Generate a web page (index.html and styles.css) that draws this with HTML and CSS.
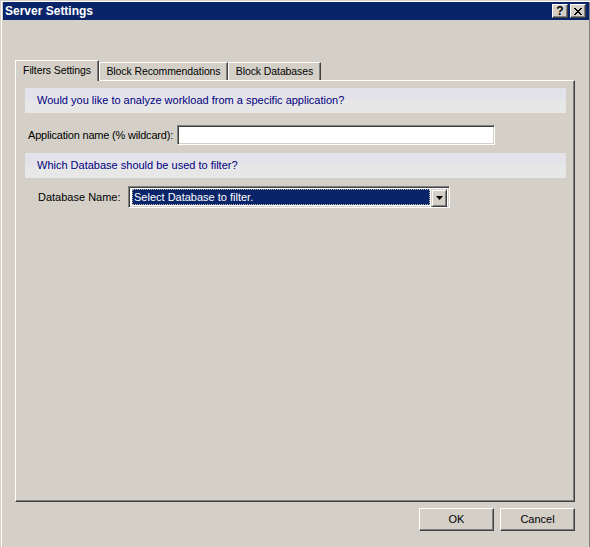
FILE: index.html
```html
<html>
  <head>
    <title>Server Settings</title>
    <link rel="stylesheet" href="styles.css">
  </head>
  <body>
    <div class="window">
      <div class="titlebar">
        <div class="title">Server Settings</div>
        <div class="caption-buttons">
          <div class="cap-btn">?</div>
          <div class="cap-btn close">
            <svg width="8" height="7" viewBox="0 0 8 7">
              <path d="M0 0h2v1H0zM6 0h2v1H6zM1 1h2v1H1zM5 1h2v1H5zM2 2h4v1H2zM3 3h2v1H3zM2 4h4v1H2zM1 5h2v1H1zM5 5h2v1H5zM0 6h2v1H0zM6 6h2v1H6z" fill="#000"/>
            </svg>
          </div>
        </div>
      </div>
      <div class="client">
        <div class="tabs">
          <div class="tab active tab-filters">Filters Settings</div>
          <div class="tab tab-recs">Block Recommendations</div>
          <div class="tab tab-dbs">Block Databases</div>
        </div>
        <div class="panel">
          <div class="band">Would you like to analyze workload from a specific application?</div>
          <div class="row app-row">
            <div class="label app-label">Application name (% wildcard):</div>
            <div class="textbox app-box"></div>
          </div>
          <div class="band second">Which Database should be used to filter?</div>
          <div class="row db-row">
            <div class="label db-label">Database Name:</div>
            <div class="combo">
              <div class="combo-value"><span class="focus">Select Database to filter.</span></div>
              <div class="combo-btn">
                <svg width="7" height="4" viewBox="0 0 7 4"><path d="M0 0h7L3.5 4z" fill="#000"/></svg>
              </div>
            </div>
          </div>
        </div>
        <div class="buttons">
          <div class="button">OK</div>
          <div class="button">Cancel</div>
        </div>
      </div>
    </div>
  </body>
</html>
```

FILE: styles.css
```css
body {
  margin: 0;
  background: #d4d0c8;
  font-family: "Liberation Sans", Arial, sans-serif;
  font-size: 11px;
  color: #000;
  overflow: hidden;
}
.window {
  width: 586px;
  height: 560px;
  border: 1px solid;
  border-color: #d4d0c8 #404040 #404040 #d4d0c8;
  box-shadow: inset 1px 1px #fff, inset -1px -1px #808080;
  padding: 1px 1px 0 2px;
}
.titlebar {
  height: 18px;
  background: #0a246a;
  display: flex;
  align-items: center;
  justify-content: space-between;
}
.title {
  color: #fff;
  font-weight: bold;
  font-size: 12px;
  padding-left: 2px;
}
.caption-buttons {
  display: flex;
  gap: 2px;
  padding-right: 3px;
}
.cap-btn {
  width: 14px;
  height: 12px;
  background: #d4d0c8;
  border: 1px solid;
  border-color: #fff #404040 #404040 #fff;
  box-shadow: inset -1px -1px #808080;
  display: flex;
  align-items: center;
  justify-content: center;
  font-weight: bold;
  font-size: 12px;
  line-height: 12px;
}
.client {
  padding: 40px 14px 0 12px;
}
.tabs {
  display: flex;
  align-items: flex-end;
  height: 21px;
  position: relative;
  z-index: 1;
  margin-bottom: -1px;
}
.tab {
  box-sizing: border-box;
  height: 18px;
  border: 1px solid;
  border-bottom: none;
  border-color: #fff #404040 transparent #fff;
  box-shadow: inset -1px 0 #808080;
  line-height: 17px;
  margin-bottom: 1px;
  text-align: center;
  white-space: nowrap;
  font-size: 10.5px;
  letter-spacing: -0.1px;
}
.tab.active {
  height: 21px;
  line-height: 19px;
  margin-bottom: 0;
  background: #d4d0c8;
}
.tab-filters {
  width: 84px;
}
.tab-recs {
  width: 129px;
}
.tab-dbs {
  width: 93px;
}
.panel {
  height: 411px;
  border: 1px solid;
  border-color: #fff #404040 #404040 #fff;
  box-shadow: inset -1px -1px #808080;
  padding: 7px 8px 2px 9px;
}
.band {
  height: 25px;
  line-height: 25px;
  padding-left: 12px;
  color: #000080;
  white-space: nowrap;
  background: linear-gradient(#e3e1e9, #e5e3ea 50%, #e7e7e7 55%, #e7e7e7);
}
.band.second {
  margin-top: 8px;
}
.row {
  display: flex;
  align-items: center;
}
.label {
  white-space: nowrap;
}
.app-row {
  margin-top: 12px;
}
.app-label {
  width: 149px;
  margin-left: 3px;
  letter-spacing: -0.2px;
}
.textbox {
  height: 18px;
  background: #fff;
  border: 1px solid;
  border-color: #808080 #fff #fff #808080;
  box-shadow: inset 1px 1px #404040, inset -1px -1px #d4d0c8;
}
.app-box {
  width: 316px;
}
.db-row {
  margin-top: 8px;
}
.db-label {
  width: 90px;
  margin-left: 13px;
}
.combo {
  display: flex;
  background: #fff;
  border: 1px solid;
  border-color: #808080 #fff #fff #808080;
  box-shadow: inset 1px 1px #404040, inset -1px -1px #d4d0c8;
  padding: 2px;
  box-sizing: border-box;
  height: 22px;
  width: 322px;
}
.combo-value {
  flex: 1;
  padding: 0 1px 1px 1px;
}
.focus {
  display: block;
  height: 14px;
  line-height: 14px;
  background: #0a246a;
  color: #fff;
  padding-left: 1px;
  border: 1px dotted #b8b4ac;
}
.combo-btn {
  background: #d4d0c8;
  border: 1px solid;
  border-color: #d4d0c8 #404040 #404040 #d4d0c8;
  box-shadow: inset 1px 1px #fff, inset -1px -1px #808080;
  box-sizing: border-box;
  width: 16px;
  height: 18px;
  display: flex;
  align-items: center;
  justify-content: center;
}
.buttons {
  display: flex;
  justify-content: flex-end;
  gap: 6px;
  margin-top: 6px;
}
.button {
  width: 73px;
  height: 21px;
  line-height: 21px;
  text-align: center;
  border: 1px solid;
  border-color: #fff #404040 #404040 #fff;
  box-shadow: inset -1px -1px #808080;
}
```
